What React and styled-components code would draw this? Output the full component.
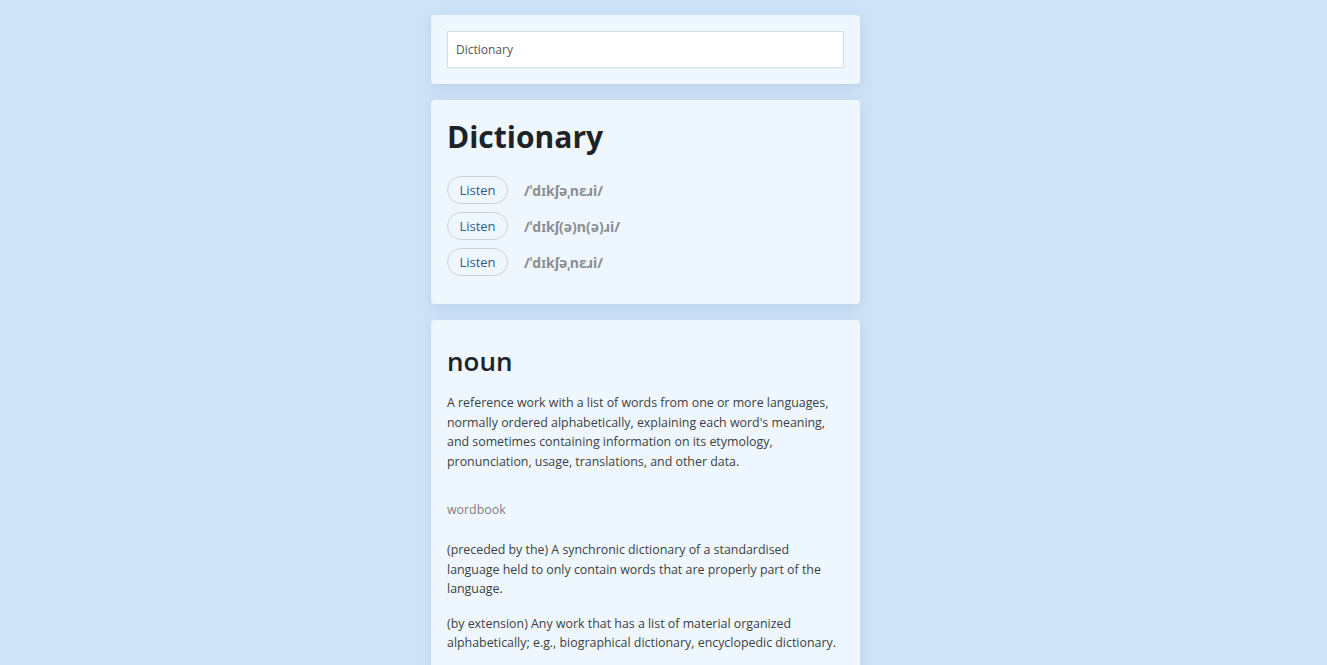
import React from 'react';
import styled, { createGlobalStyle } from 'styled-components';

const GlobalStyle = createGlobalStyle`
  html, body {
    margin: 0;
    padding: 0;
    background: #cfe3f7;
    font-family: "Open Sans", "Noto Sans", sans-serif;
  }
`;

const entry = {
  word: 'Dictionary',
  phonetics: ['/ˈdɪkʃəˌnɛɹi/', '/ˈdɪkʃ(ə)n(ə)ɹi/', '/ˈdɪkʃəˌnɛɹi/'],
  meanings: [
    {
      partOfSpeech: 'noun',
      definitions: [
        {
          text: "A reference work with a list of words from one or more languages, normally ordered alphabetically, explaining each word's meaning, and sometimes containing information on its etymology, pronunciation, usage, translations, and other data.",
          synonym: 'wordbook',
        },
        {
          text: '(preceded by the) A synchronic dictionary of a standardised language held to only contain words that are properly part of the language.',
        },
        {
          text: '(by extension) Any work that has a list of material organized alphabetically; e.g., biographical dictionary, encyclopedic dictionary.',
        },
      ],
    },
  ],
};

function App() {
  return (
    <>
      <GlobalStyle />
      <Layout>
        <Page>
          <Card>
            <SearchInput defaultValue={entry.word} />
          </Card>

          <Card $pad="12px 16px 28px">
            <Word>{entry.word}</Word>
            <PhoneticList>
              {entry.phonetics.map((p, i) => (
                <PhoneticRow key={i}>
                  <ListenButton>Listen</ListenButton>
                  <Phonetic>{p}</Phonetic>
                </PhoneticRow>
              ))}
            </PhoneticList>
          </Card>

          {entry.meanings.map((m) => (
            <Card key={m.partOfSpeech} $pad="25px 16px 24px">
              <PartOfSpeech>{m.partOfSpeech}</PartOfSpeech>
              {m.definitions.map((d, i) => (
                <Definition key={i}>
                  <p>{d.text}</p>
                  {d.synonym && <Synonym>{d.synonym}</Synonym>}
                </Definition>
              ))}
            </Card>
          ))}
        </Page>
      </Layout>
    </>
  );
}

const Layout = styled.div`
  padding-right: 36px;
`;

const Page = styled.div`
  width: 429px;
  margin: 0 auto;
  padding-top: 15px;
  display: flex;
  flex-direction: column;
  gap: 16px;
`;

const Card = styled.section`
  background-color: #eff7fe;
  border-radius: 4px;
  padding: ${(p) => p.$pad || '16px'};
  box-shadow: 0 4px 14px rgba(90, 130, 180, 0.18);
`;

const SearchInput = styled.input`
  display: block;
  box-sizing: border-box;
  width: 100%;
  height: 37px;
  padding: 0 8px;
  border: 1px solid #d3dbe3;
  border-radius: 0;
  background: #fff;
  font-family: inherit;
  font-size: 12px;
  color: #555;
  outline: none;
`;

const Word = styled.h1`
  margin: 0 0 14px;
  font-size: 30px;
  font-weight: 700;
  color: #1e2328;
  line-height: 50px;
`;

const PhoneticList = styled.div`
  display: flex;
  flex-direction: column;
  gap: 8px;
`;

const PhoneticRow = styled.div`
  display: flex;
  align-items: center;
  gap: 16px;
`;

const ListenButton = styled.button`
  box-sizing: border-box;
  width: 61px;
  height: 28px;
  border: 1px solid #cdd3d9;
  border-radius: 14px;
  background: transparent;
  color: #2d5d8a;
  font-family: inherit;
  font-size: 13px;
  padding: 0;
  cursor: pointer;
`;

const Phonetic = styled.span`
  font-size: 14px;
  font-weight: 700;
  color: #8a8d91;
`;

const PartOfSpeech = styled.h2`
  margin: 0 0 16px;
  font-size: 26px;
  font-weight: 600;
  color: #1e2328;
  line-height: 32px;
`;

const Definition = styled.div`
  margin-bottom: 15px;

  p {
    margin: 0;
    font-size: 12.4px;
    line-height: 19.5px;
    color: #3a3f45;
  }
`;

const Synonym = styled.div`
  margin-top: 30px;
  margin-bottom: 22px;
  font-size: 12.4px;
  color: #7b8086;
`;

export default App;
